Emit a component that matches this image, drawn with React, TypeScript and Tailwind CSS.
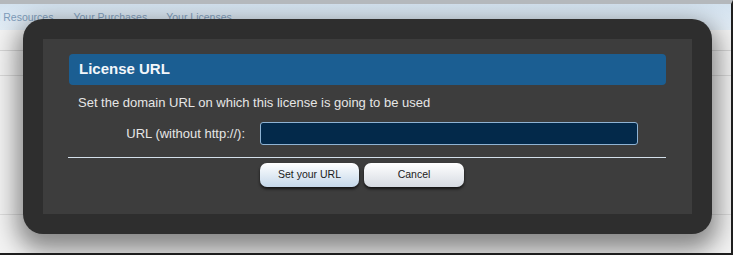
import React from 'react';

const font = { fontFamily: '"Liberation Sans", Arial, sans-serif' };

const NavBar = () => (
    <div className="h-[26px] bg-gradient-to-b from-[#d3e2ef] to-[#e3edf6] flex items-start pt-[7px] text-[10.5px] leading-[12px] text-[#7f9dbb]">
        <span className="ml-[-2px]">l Resources</span>
        <span className="ml-[20px]">Your Purchases</span>
        <span className="ml-[19px]">Your Licenses</span>
    </div>
);

const DialogButton = ({ label, tone }: { label: string; tone: 'blue' | 'gray' }) => (
    <button
        className={
            'h-[24px] rounded-[7px] text-[10.5px] text-[#1b1b1b] bg-gradient-to-b shadow-[0_2px_3px_rgba(0,0,0,0.7)] ' +
            (tone === 'blue' ? 'w-[99px] from-white to-[#c5d8ea]' : 'w-[100px] from-white to-[#d6dbe2]')
        }
    >
        {label}
    </button>
);

const LicenseDialog = () => (
    <div className="absolute left-[23px] top-[15px] w-[689px] h-[215px] rounded-[20px] bg-[#2e2e2e] p-[20px] shadow-[0_10px_24px_6px_rgba(0,0,0,0.45)]">
        <div className="h-full bg-[#3d3d3d] pt-[15px] pl-[26px] pr-[26px]">
            {/* Title bar */}
            <div className="h-[31px] rounded-[4px] bg-[#1b5e92] pl-[10px] flex items-center text-[15px] font-bold text-[#f2f6fa]">
                License URL
            </div>

            {/* Description */}
            <div className="mt-[9px] pl-[9px] h-[18px] leading-[18px] text-[13px] text-[#e6e6e6]">
                Set the domain URL on which this license is going to be used
            </div>

            {/* URL row */}
            <div className="mt-[10px] flex items-center">
                <span className="w-[176px] text-right text-[13px] text-[#e6e6e6]">URL (without http://):</span>
                <input
                    className="ml-[15px] w-[378px] h-[23px] rounded-[3px] border border-[#8fb3d3] bg-[#03294a] outline-none"
                    defaultValue=""
                />
            </div>

            {/* Divider */}
            <div className="mt-[12px] ml-[-1px] h-px bg-[#d3dfea]" />

            {/* Buttons */}
            <div className="mt-[5px] ml-[191px] flex gap-[5px]">
                <DialogButton label="Set your URL" tone="blue" />
                <DialogButton label="Cancel" tone="gray" />
            </div>
        </div>
    </div>
);

const App = () => {
    return (
        <div style={font} className="relative w-[733px] h-[255px] overflow-hidden bg-[#f3f3f3] border-t-4 border-t-[#b4b8bc] border-r-2 border-r-[#1e1e1e] border-b-2 border-b-[#1e1e1e]">
            <NavBar />
            <div className="mt-[20px] h-px bg-[#d6d6d6]" />
            <div className="mt-[24px] h-px bg-[#d9d9d9]" />
            <div className="mt-[138px] h-px bg-[#dcdcdc]" />
            <LicenseDialog />
        </div>
    );
};

export default App;
